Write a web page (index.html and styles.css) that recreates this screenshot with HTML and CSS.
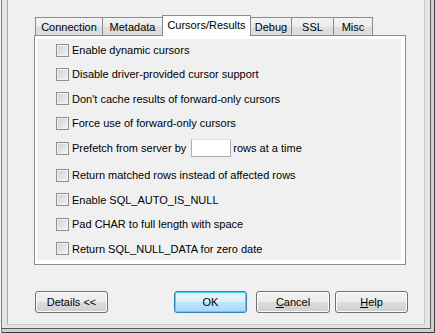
FILE: index.html
```html
<!DOCTYPE html>
<html lang="en">
<head>
    <meta charset="UTF-8">
    <link rel="stylesheet" href="styles.css">
</head>
<body>
    <div class="window">
        <div class="client">
            <div class="tabs">
                <div class="tab first t-conn">Connection</div>
                <div class="tab t-meta">Metadata</div>
                <div class="tab active">Cursors/Results</div>
                <div class="tab t-debug">Debug</div>
                <div class="tab t-ssl">SSL</div>
                <div class="tab t-misc">Misc</div>
            </div>
            <div class="panel">
                <div class="page">
                    <label class="row"><span class="check"></span>Enable dynamic cursors</label>
                    <label class="row"><span class="check"></span>Disable driver-provided cursor support</label>
                    <label class="row"><span class="check"></span>Don't cache results of forward-only cursors</label>
                    <label class="row"><span class="check"></span>Force use of forward-only cursors</label>
                    <label class="row prefetch"><span class="check"></span>Prefetch from server by <span class="num"></span>rows at a time</label>
                    <label class="row matched"><span class="check"></span>Return matched rows instead of affected rows</label>
                    <label class="row"><span class="check"></span>Enable SQL_AUTO_IS_NULL</label>
                    <label class="row"><span class="check"></span>Pad CHAR to full length with space</label>
                    <label class="row"><span class="check"></span>Return SQL_NULL_DATA for zero date</label>
                </div>
            </div>
            <div class="buttons">
                <div class="btn">Details &lt;&lt;</div>
                <div class="spacer"></div>
                <div class="btn default">OK</div>
                <div class="btn cancel"><u>C</u>ancel</div>
                <div class="btn help"><u>H</u>elp</div>
            </div>
        </div>
    </div>
</body>
</html>
```

FILE: styles.css
```css
html, body {
    margin: 0;
    padding: 0;
}

body {
    width: 435px;
    height: 333px;
    overflow: hidden;
    background: #f0f0f0;
    font-family: "Liberation Sans", Arial, sans-serif;
    font-size: 11px;
    color: #000;
}

/* window frame */
.window {
    box-sizing: border-box;
    width: 435px;
    height: 333px;
    padding: 0 10px 8px 7px;
    background: #e4e4e4;
    box-shadow: inset 1px 0 0 #f4f4f4, inset 2px 0 0 #7a7a7a, inset -1px -1px 0 #3c3c3c, inset -4px -4px 0 #cfcfcf, inset -5px -5px 0 #5a5a5a;
}

.client {
    box-sizing: border-box;
    height: 325px;
    background: #f0f0f0;
    border-left: 1px solid #a8a8a8;
    border-right: 1px solid #c8c8c8;
    border-bottom: 1px solid #c8c8c8;
    padding: 15px 0 0 26px;
}

/* tabs */
.tabs {
    display: flex;
    align-items: flex-start;
    height: 21px;
    position: relative;
    z-index: 1;
}

.tab {
    box-sizing: border-box;
    height: 18px;
    margin-top: 2px;
    margin-left: -1px;
    padding-top: 3px;
    text-align: center;
    border: 1px solid #898c95;
    border-bottom: none;
    background: linear-gradient(#f3f3f3, #ebebeb 50%, #dedede 50%, #dcdcdc);
}

.tab.first {
    margin-left: 1px;
}

.t-conn { width: 68px; }
.t-meta { width: 61px; }
.t-debug { width: 42px; }
.t-ssl { width: 43px; }
.t-misc { width: 40px; }

.tab.active {
    width: 89px;
    height: 21px;
    margin-top: 0;
    padding-top: 3px;
    background: #fff;
}

/* tab page */
.panel {
    box-sizing: border-box;
    width: 372px;
    height: 230px;
    margin-top: -1px;
    border: 1px solid #898c95;
    background: #fff;
    padding: 3px 4px 4px 2px;
}

.page {
    height: 100%;
    overflow: hidden;
    background: #f0f0f0;
    padding: 1px 0 0 19px;
    box-sizing: border-box;
    display: flex;
    flex-direction: column;
    gap: 4.4px;
}

.row {
    display: flex;
    align-items: center;
    height: 20px;
    flex: none;
}

.row.prefetch {
    margin-top: 0.5px;
}

.row.matched {
    margin-top: 3px;
}

.check {
    box-sizing: border-box;
    width: 13px;
    height: 13px;
    margin-right: 3px;
    border: 1px solid #8e8f8f;
    background: linear-gradient(135deg, #cdd0d4, #f4f4f4);
    box-shadow: inset 0 0 0 1px #f2f2f2;
}

.num {
    box-sizing: border-box;
    width: 40px;
    height: 18px;
    margin: 0 2px 0 5px;
    border: 1px solid #abadb3;
    border-top-color: #e3e3e3;
    background: #fff;
}

/* dialog buttons */
.buttons {
    display: flex;
    margin-top: 26px;
    padding-left: 1px;
    width: 373px;
}

.spacer {
    flex: 1;
}

.btn {
    box-sizing: border-box;
    width: 73px;
    height: 22px;
    display: flex;
    align-items: center;
    justify-content: center;
    border: 1px solid #707070;
    border-radius: 3px;
    background: linear-gradient(#f2f2f2, #ebebeb 50%, #dddddd 50%, #cfcfcf);
    box-shadow: inset 0 0 0 1px #fcfcfc;
}

.btn.default {
    border-color: #3c7fb1;
    background: linear-gradient(#eaf6fd, #d9f0fc 50%, #bee6fd 50%, #a7d9f5);
    box-shadow: inset 0 0 0 1px #48d7fb;
}

.btn.cancel {
    margin-left: 9px;
    width: 74px;
}

.btn.help {
    margin-left: 5px;
}
```
